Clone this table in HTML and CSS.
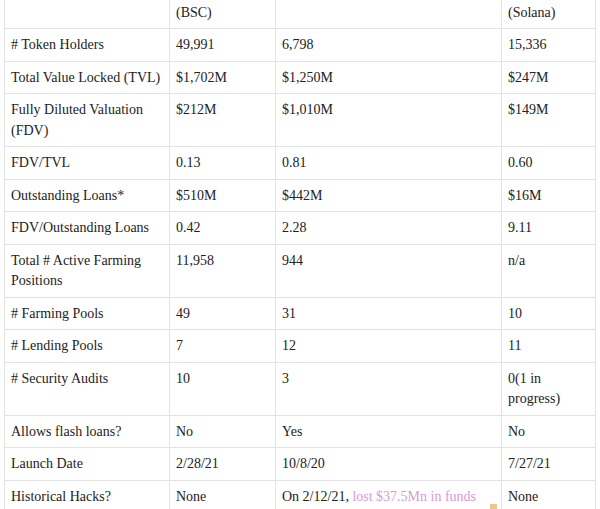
FILE: index.html
```html
<!DOCTYPE html>
<html>
<head>
<meta charset="utf-8">
<link rel="stylesheet" href="styles.css">
</head>
<body>
<table class="cmp">
  <colgroup>
    <col class="c1"><col class="c2"><col class="c3"><col class="c4">
  </colgroup>
  <thead>
    <tr>
      <th></th>
      <th>Alpaca Finance<br>(BSC)</th>
      <th>Alpha Homora V2 (Ethereum)</th>
      <th>Tulip Protocol<br>(Solana)</th>
    </tr>
  </thead>
  <tbody>
    <tr><td># Token Holders</td><td>49,991</td><td>6,798</td><td>15,336</td></tr>
    <tr><td>Total Value Locked (TVL)</td><td>$1,702M</td><td>$1,250M</td><td>$247M</td></tr>
    <tr><td>Fully Diluted Valuation (FDV)</td><td>$212M</td><td>$1,010M</td><td>$149M</td></tr>
    <tr><td>FDV/TVL</td><td>0.13</td><td>0.81</td><td>0.60</td></tr>
    <tr><td>Outstanding Loans*</td><td>$510M</td><td>$442M</td><td>$16M</td></tr>
    <tr><td>FDV/Outstanding Loans</td><td>0.42</td><td>2.28</td><td>9.11</td></tr>
    <tr><td>Total # Active Farming Positions</td><td>11,958</td><td>944</td><td>n/a</td></tr>
    <tr><td># Farming Pools</td><td>49</td><td>31</td><td>10</td></tr>
    <tr><td># Lending Pools</td><td>7</td><td>12</td><td>11</td></tr>
    <tr><td># Security Audits</td><td>10</td><td>3</td><td>0(1 in progress)</td></tr>
    <tr><td>Allows flash loans?</td><td>No</td><td>Yes</td><td>No</td></tr>
    <tr><td>Launch Date</td><td>2/28/21</td><td>10/8/20</td><td>7/27/21</td></tr>
    <tr><td>Historical Hacks?</td><td>None</td><td>On 2/12/21, <a class="link" href="#">lost $37.5Mn in funds</a></td><td>None</td></tr>
  </tbody>
</table>
<div class="wm"><span class="wm-icon"></span></div>
</body>
</html>
```
FILE: styles.css
```css
html, body {
  margin: 0;
  padding: 0;
  background: #ffffff;
  overflow: hidden;
}
body {
  font-family: "Liberation Serif", "DejaVu Serif", serif;
  font-size: 14px;
  color: #222222;
  width: 600px;
  height: 509px;
  position: relative;
}
.cmp {
  border-collapse: collapse;
  table-layout: fixed;
  width: 591px;
  margin: -25px 0 0 4px;
}
.c1 { width: 165px; }
.c2 { width: 106px; }
.c3 { width: 226px; }
.c4 { width: 94px; }
.cmp th, .cmp td {
  border: 1px solid #e3e3e3;
  padding: 6px 6px 5px 6px;
  line-height: 20.5px;
  text-align: left;
  vertical-align: top;
  font-weight: normal;
}
.link {
  color: #d99ad9;
  text-decoration: none;
}
.wm {
  position: absolute;
  left: 490px;
  top: 504px;
  opacity: 0.6;
}
.wm-icon {
  display: block;
  width: 7px;
  height: 6px;
  background: #e0a030;
  border-radius: 1px;
}
```
